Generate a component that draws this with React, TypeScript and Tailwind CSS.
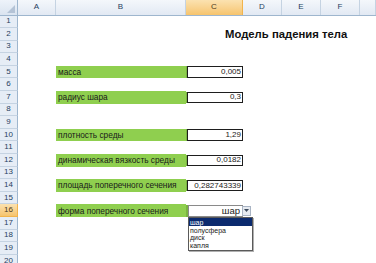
import React from "react";

const COLS = ["A", "B", "C", "D", "E", "F", ""];
const GRID = "grid grid-cols-[18px_38px_130px_57px_39px_39px_39px_16px]";

type RowDef = { label?: string; value?: string; dropdown?: boolean; title?: boolean };

const rows: Record<number, RowDef> = {
  2: { title: true },
  5: { label: "масса", value: "0,005" },
  7: { label: "радиус шара", value: "0,3" },
  10: { label: "плотность среды", value: "1,29" },
  12: { label: "динамическая вязкость среды", value: "0,0182" },
  14: { label: "площадь поперечного сечения", value: "0,282743339" },
  16: { label: "форма поперечного сечения", dropdown: true },
};

function ValueBox({ value }: { value: string }) {
  return (
    <div className="flex h-full items-stretch py-[0.5px]">
      <div className="w-[1px] bg-[#79b340]" />
      <div className="flex flex-1 items-center justify-end border-[1.5px] border-[#1e1e1e] bg-white pr-[1px] text-[8px] leading-none text-[#222]">
        {value}
      </div>
    </div>
  );
}

function Dropdown() {
  return (
    <div className="relative flex h-full items-stretch py-[0.5px]">
      <div className="w-[1.5px] bg-[#79b340]" />
      <div className="flex flex-1 items-center justify-end border border-[#8a8a8a] bg-white pr-[2px] text-[9.5px] leading-none text-[#222]">
        шар
      </div>
      <div className="absolute left-[56px] top-[1.5px] flex h-[10px] w-[9px] items-center justify-center border border-[#a9b4c4] bg-[#e6eaf0]">
        <svg width="5" height="3" viewBox="0 0 5 3">
          <path d="M0 0 H5 L2.5 3 Z" fill="#3c4a5c" />
        </svg>
      </div>
      <div className="absolute left-[1.5px] top-[12.5px] z-10 flex w-[65px] flex-col border border-[#5a5a5a] bg-white py-[0.5px] text-[7px] leading-none text-[#222] shadow-[1px_1px_0_#b0b0b0]">
        <div className="flex h-[7.8px] items-center bg-[#0b2a6e] pl-[1.5px] text-white">шар</div>
        <div className="flex h-[7.8px] items-center pl-[1.5px]">полусфера</div>
        <div className="flex h-[7.8px] items-center pl-[1.5px]">диск</div>
        <div className="flex h-[7.8px] items-center pl-[1.5px]">капля</div>
      </div>
    </div>
  );
}

export default function App() {
  const rowNums = Array.from({ length: 20 }, (_, i) => i + 1);
  return (
    <div
      className="h-[263px] w-[376px] overflow-hidden bg-white"
      style={{ fontFamily: '"Liberation Sans", Arial, sans-serif' }}
    >
      {/* column header */}
      <div className={`${GRID} h-[15.5px] border-b border-[#9eb6ce]`}>
        <div className="relative border-r border-[#9eb6ce] bg-gradient-to-b from-[#eef3fa] to-[#dae4f0]">
          <svg className="absolute bottom-[2px] right-[2px]" width="8" height="8" viewBox="0 0 8 8">
            <path d="M8 0 V8 H0 Z" fill="#b4c3d6" />
          </svg>
        </div>
        {COLS.map((c, i) => (
          <div
            key={i}
            className={`flex items-center justify-center border-r text-[8px] leading-none ${
              c === "C"
                ? "border-[#f2b44c] bg-gradient-to-b from-[#fbe2b0] to-[#f6c46d] text-[#4a3a1e]"
                : "border-[#c5d3e2] bg-gradient-to-b from-[#f4f7fb] to-[#e2e9f3] text-[#27415f]"
            }`}
          >
            {c}
          </div>
        ))}
      </div>
      {rowNums.map((n) => {
        const r = rows[n] || {};
        return (
          <div key={n} className={`${GRID} h-[12.6px]`}>
            <div
              className={`flex items-center justify-center border-b border-r text-[8px] leading-none ${
                n === 16
                  ? "border-[#f2b44c] bg-gradient-to-b from-[#fbe2b0] to-[#f6c46d] text-[#4a3a1e]"
                  : "border-[#c5d3e2] border-r-[#9eb6ce] bg-[#e6edf6] text-[#27415f]"
              }`}
            >
              {n}
            </div>
            <div />
            {r.title ? (
              <>
                <div />
                <div className="col-span-5 flex items-center pl-[39px] pt-[1px] text-[11.3px] font-bold leading-none text-[#111]">
                  Модель падения тела
                </div>
              </>
            ) : (
              <>
                <div
                  className={`flex items-center pl-[2px] text-[8.3px] leading-none text-[#1a1a1a] ${
                    r.label ? "bg-[#8fcf4f]" : ""
                  }`}
                >
                  {r.label}
                </div>
                <div>
                  {r.value && <ValueBox value={r.value} />}
                  {r.dropdown && <Dropdown />}
                </div>
                <div />
                <div />
                <div />
                <div />
              </>
            )}
          </div>
        );
      })}
    </div>
  );
}
